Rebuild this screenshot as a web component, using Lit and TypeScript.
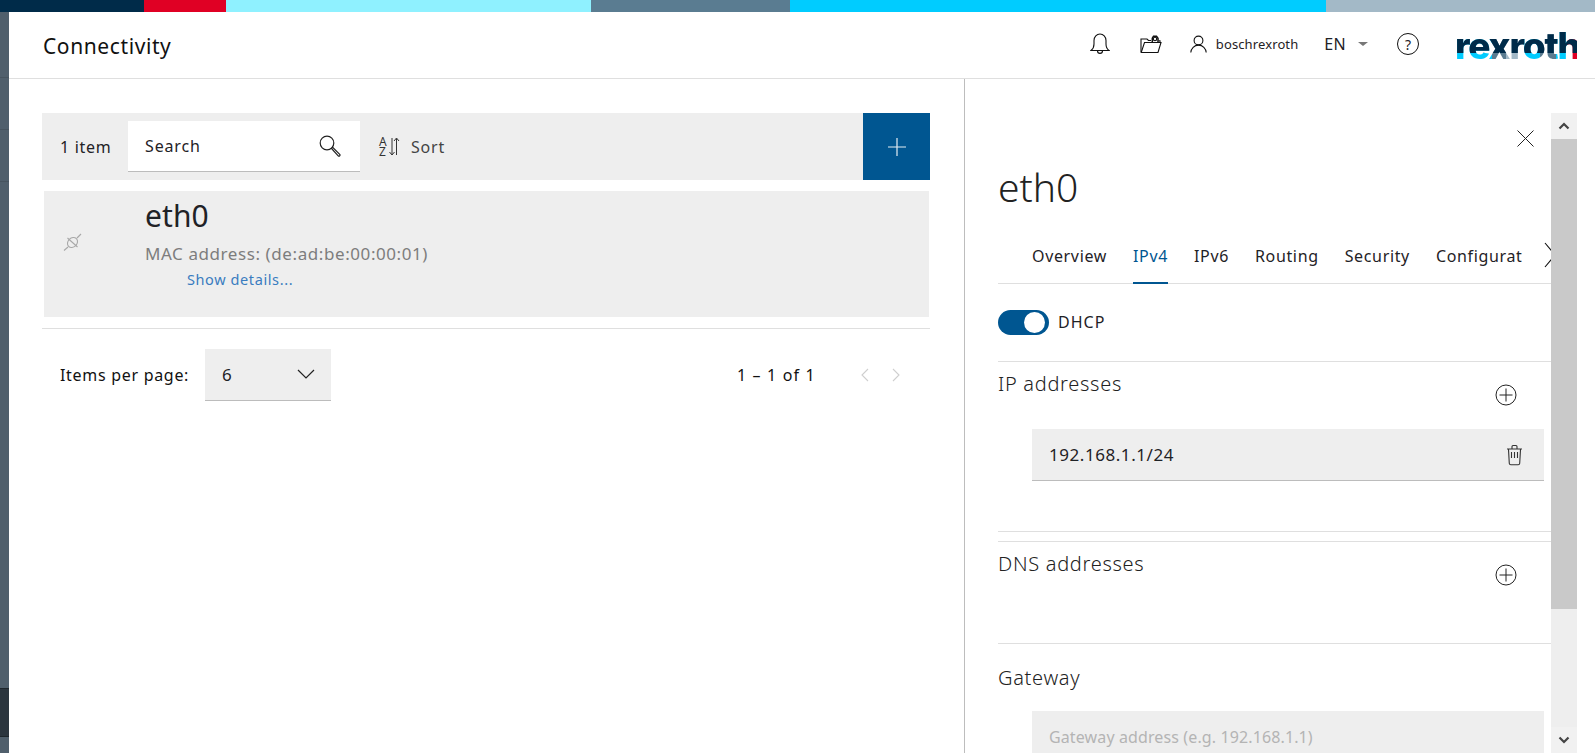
import { LitElement, html, css } from "lit";
import { customElement } from "lit/decorators.js";

const plusCircle = html`<svg class="pc" viewBox="0 0 22 22" width="22" height="22" fill="none" stroke="#222" stroke-width="1"><circle cx="11" cy="11" r="10"/><path d="M11 4.500v13M4.500 11h13"/></svg>`;

@customElement("app-root")
export class AppRoot extends LitElement {
  static styles = css`
    :host { display: flex; flex-direction: column; height: 100vh; overflow: hidden; background: #fff; color: #1f2226;
      font-family: "Noto Sans", "Open Sans", sans-serif; font-size: 16px; }
    svg { display: block; flex: none; }
    .stripe { display: flex; height: 12px; flex: none; }
    .s1 { width: 144px; background: #002b49; }
    .s2 { width: 82px; background: #e00024; }
    .s3 { width: 365px; background: #8ff1ff; }
    .s4 { width: 199px; background: #5a7c91; }
    .s5 { width: 536px; background: #00ccff; }
    .s6 { flex: 1; background: #a3b9c7; }

    .shell { display: flex; flex: 1; min-height: 0; }
    .rail { width: 9px; flex: none; background: #505f6c; display: flex; flex-direction: column; }
    .rail i { display: block; height: 52px; border-bottom: 1px solid #47545f; box-sizing: border-box; flex: none; }
    .rail i:first-child { height: 66px; }
    .rail .gap { flex: none; height: 506px; border: none; }
    .rail .dark { height: 49px; background: #2b353e; border-top: 1px solid #1e262c; border-bottom: 1px solid #1e262c; }
    .main { flex: 1; min-width: 0; display: flex; flex-direction: column; }

    header { flex: none; height: 64px; border-bottom: 1px solid #dfdfdf; display: flex; align-items: center; padding-left: 34px; padding-bottom: 2px; }
    .app-title { font-size: 21px; letter-spacing: .6px; flex: 1; color: #111; margin-top: 3px; }
    .hbtn { display: flex; align-items: center; }
    .bell { margin-right: 30px; }
    .folder { margin-right: 28px; }
    .uname { font-size: 13px; margin-left: 9px; margin-right: 26px; letter-spacing: .12px; }
    .lang { font-size: 16px; letter-spacing: .3px; margin-right: 12px; }
    .caret { width: 0; height: 0; border-left: 5px solid transparent; border-right: 5px solid transparent; border-top: 4px solid #777; margin-right: 29px; }
    .help { width: 20px; height: 20px; border: 1px solid #111; border-radius: 50%; display: flex; align-items: center; justify-content: center; font-size: 14px; margin-right: 36px; }
    .logo { font-family: "Inter", sans-serif; font-weight: 800; font-size: 37px; line-height: 44px; letter-spacing: -1.2px; margin: 3px 18px 0 0; width: 122px; white-space: nowrap;
      color: transparent; -webkit-background-clip: text; background-clip: text;
      background-image:
        linear-gradient(#002b49 0 66%, transparent 66%),
        linear-gradient(90deg, #00ccff 0 30%, #5a7c91 30% 42%, #a3b9c7 42% 56%, #00ccff 56% 70%, #5a7c91 70% 83%, #00ccff 83% 92%, #e00024 92%); }

    .body { flex: 1; display: flex; min-height: 0; }
    .left { width: 956px; flex: none; box-sizing: border-box; border-right: 1px solid #bdbdbd; padding: 34px 34px 0 33px; }
    .toolbar { height: 67px; background: #eee; display: flex; align-items: center; }
    .count { margin-left: 18px; width: 68px; font-size: 16px; letter-spacing: .7px; }
    .search { width: 232px; height: 51px; box-sizing: border-box; background: #fff; border-bottom: 1px solid #bcbcbc; display: flex; align-items: center; padding: 0 19px 0 17px; justify-content: space-between; letter-spacing: .85px; }
    .sort { display: flex; align-items: center; margin-left: 19px; color: #444; gap: 11px; letter-spacing: .8px; flex: 1; }
    .sort svg { overflow: visible; }
    .add { width: 67px; height: 67px; background: #005691; display: flex; align-items: center; justify-content: center; color: #e4edf3; }
    .card { height: 126px; margin: 11px 1px 0 2px; background: #eee; display: flex; }
    .card-icon { width: 101px; flex: none; padding: 42px 0 0 19px; box-sizing: border-box; color: #a8a8a8; }
    .card-title { font-size: 30px; line-height: 36px; margin-top: 7px; letter-spacing: .1px; }
    .mac { color: #7d7d7d; font-size: 17px; line-height: 24px; margin-top: 8px; letter-spacing: .58px; }
    .details { color: #3a7cc0; font-size: 14.5px; line-height: 20px; margin: 3px 0 0 42px; letter-spacing: .6px; }
    .hr { height: 1px; background: #dfdfdf; margin-top: 11px; }
    .pager { display: flex; align-items: center; margin-top: 20px; height: 52px; }
    .ipp { margin-left: 18px; width: 145px; letter-spacing: .7px; color: #111; }
    .select { width: 126px; height: 52px; box-sizing: border-box; background: #eee; border-bottom: 1px solid #bcbcbc; display: flex; align-items: center; justify-content: space-between; padding: 0 16px 1px 17px; font-size: 17px; }
    .range { margin-left: 406px; width: 124px; letter-spacing: 1.15px; color: #111; }
    .nav { display: flex; gap: 23px; color: #cfcfcf; }

    .panel { flex: 1; min-width: 0; display: flex; padding-left: 33px; padding-right: 18px; }
    .content { width: 553px; flex: none; overflow: hidden; }
    .close { display: flex; justify-content: flex-end; padding: 51px 17px 0 0; color: #222; }
    .big { font-size: 39px; line-height: 44px; margin-top: 18px; color: #222; font-weight: 300; }
    .tabs { display: flex; align-items: flex-start; height: 53px; margin-top: 22px; border-bottom: 1px solid #dfdfdf; padding-left: 34px; width: 600px; box-sizing: border-box; }
    .tab-scroll { width: 490px; flex: none; overflow: hidden; display: flex; gap: 26px; }
    .tab { height: 53px; line-height: 50px; box-sizing: border-box; white-space: nowrap; font-size: 16px; letter-spacing: .65px; color: #1f2226; flex: none; }
    .tab.on { color: #005691; border-bottom: 2px solid #005691; }
    .tab-arrow { margin: 11px 0 0 22px; color: #111; }
    .dhcp { display: flex; align-items: center; height: 25px; margin-top: 26px; gap: 9px; letter-spacing: 1px; line-height: 23px; }
    .dhcp span { margin-top: -1px; }
    .toggle { width: 51px; height: 25px; border-radius: 13px; background: #005691; box-sizing: border-box; padding: 2px 2px 2px 26px; }
    .toggle b { display: block; width: 21px; height: 21px; border-radius: 50%; background: #fff; }
    .sec { border-top: 1px solid #dfdfdf; }
    .s-ip { margin-top: 26px; padding-bottom: 50px; border-bottom: 1px solid #dfdfdf; }
    .s-dns { margin-top: 9px; height: 101px; }
    .s-gw { padding-top: 12px; }
    .sec-head { display: flex; justify-content: space-between; align-items: flex-start; height: 67px; }
    .sec-title { font-size: 20px; font-weight: 300; line-height: 44px; letter-spacing: .7px; color: #222; }
    .pc { margin: 22px 34px 0 0; }
    .field { height: 52px; box-sizing: border-box; margin: 0 7px 0 34px; background: #eee; border-bottom: 1px solid #bcbcbc; display: flex; align-items: center; justify-content: space-between; padding: 0 21px 0 17px; }
    .val { font-size: 17px; letter-spacing: .55px; }
    .s-gw .sec-head { height: 55px; }
    .ph { color: #b4b4b4; letter-spacing: .12px; }

    .scroll { width: 26px; flex: none; margin-top: 34px; display: flex; flex-direction: column; background: #eee; }
    .sb { height: 26px; flex: none; display: flex; align-items: center; justify-content: center; color: #444; background: #f1f1f1; }
    .thumb { height: 470px; flex: none; background: #c9c9c9; }
    .track { flex: 1; }
  `;

  render() {
    return html`
      <div class="stripe"><div class="s1"></div><div class="s2"></div><div class="s3"></div><div class="s4"></div><div class="s5"></div><div class="s6"></div></div>
      <div class="shell">
        <div class="rail"><i></i><i></i><i></i><i class="gap"></i><i class="dark"></i></div>
        <div class="main">
          <header>
            <div class="app-title">Connectivity</div>
            <div class="hbtn bell">
              <svg viewBox="0 0 20 22" width="20" height="22" fill="none" stroke="#111" stroke-width="1.100"><path d="M1 17.500c2.300-1.700 3-3.400 3-6.500V7.500a6 6.500 0 0 1 12 0V11c0 3.100.7 4.800 3 6.500z"/><path d="M7.500 17.700a2.500 2.700 0 0 0 5 0"/></svg>
            </div>
            <div class="hbtn folder">
              <svg viewBox="0 0 22 20" width="22" height="20" fill="none" stroke="#111" stroke-width="1.100"><path d="M1 18V5h6l1.500 1.500H11"/><path d="M1.200 18.500h16.800l3-10H4.500z"/><path d="M20 8.500V6.800h-1.500"/><circle cx="15" cy="5" r="1.700"/><path d="M12.300 8V4.200l1.200-1.900 3-.1 1.500 2V8" stroke-width="1.500"/></svg>
            </div>
            <div class="hbtn">
              <svg viewBox="0 0 17 18" width="17" height="18" fill="none" stroke="#111" stroke-width="1.100"><circle cx="8.500" cy="5.500" r="4.400"/><path d="M.8 17.500c.3-4 3.400-7.400 7.700-7.400s7.400 3.400 7.700 7.400"/></svg>
              <span class="uname">boschrexroth</span>
            </div>
            <span class="lang">EN</span><span class="caret"></span>
            <span class="help">?</span>
            <div class="logo">rexroth</div>
          </header>
          <div class="body">
            <section class="left">
              <div class="toolbar">
                <span class="count">1 item</span>
                <div class="search"><span>Search</span>
                  <svg viewBox="0 0 22 22" width="22" height="22" fill="none" stroke="#222" stroke-width="1.200"><circle cx="8" cy="8" r="6.800"/><path d="M12.500 13.500l1.200-1.200 7 7a1 1 0 0 1-1.500 1.500z"/></svg>
                </div>
                <div class="sort">
                  <svg viewBox="0 0 21 21" width="21" height="21" fill="none" stroke="#333" stroke-width="1"><text x="0" y="9.500" font-size="12" fill="#333" stroke="none" font-family="Noto Sans">A</text><text x="0" y="20" font-size="12" fill="#333" stroke="none" font-family="Noto Sans">Z</text><path d="M13 2v16.500M10.500 16l2.500 3 2.500-3M17.500 19V2.500M15 5l2.500-3L20 5"/></svg>
                  <span>Sort</span>
                </div>
                <div class="add"><svg viewBox="0 0 18 18" width="18" height="18" stroke="currentColor" stroke-width="1.200"><path d="M9 0v18M0 9h18"/></svg></div>
              </div>
              <div class="card">
                <div class="card-icon">
                  <svg viewBox="0 0 19 19" width="19" height="19" fill="none" stroke="currentColor" stroke-width="1.100"><ellipse cx="9.500" cy="9.500" rx="5.500" ry="4.500" transform="rotate(-45 9.500 9.500)"/><path d="M1 17.500l4-3.500M14 5l4-4M4.500 5l10 9"/></svg>
                </div>
                <div>
                  <div class="card-title">eth0</div>
                  <div class="mac">MAC address: (de:ad:be:00:00:01)</div>
                  <div class="details">Show details...</div>
                </div>
              </div>
              <div class="hr"></div>
              <div class="pager">
                <span class="ipp">Items per page:</span>
                <div class="select"><span>6</span>
                  <svg viewBox="0 0 18 10" width="18" height="10" fill="none" stroke="#222" stroke-width="1.200"><path d="M1 1l8 8 8-8"/></svg>
                </div>
                <span class="range">1 – 1 of 1</span>
                <div class="nav">
                  <svg viewBox="0 0 8 14" width="8" height="14" fill="none" stroke="currentColor" stroke-width="1.100"><path d="M7 1L1 7l6 6"/></svg>
                  <svg viewBox="0 0 8 14" width="8" height="14" fill="none" stroke="currentColor" stroke-width="1.100"><path d="M1 1l6 6-6 6"/></svg>
                </div>
              </div>
            </section>
            <section class="panel">
              <div class="content">
                <div class="close"><svg viewBox="0 0 17 17" width="17" height="17" fill="none" stroke="currentColor" stroke-width="1"><path d="M.5.5l16 16M16.500.5l-16 16"/></svg></div>
                <div class="big">eth0</div>
                <div class="tabs">
                  <div class="tab-scroll">
                    <span class="tab">Overview</span>
                    <span class="tab on">IPv4</span>
                    <span class="tab">IPv6</span>
                    <span class="tab">Routing</span>
                    <span class="tab">Security</span>
                    <span class="tab">Configuration</span>
                  </div>
                  <svg class="tab-arrow" viewBox="0 0 12 26" width="12" height="26" fill="none" stroke="currentColor" stroke-width="1.100"><path d="M1 1l10 12L1 25"/></svg>
                </div>
                <div class="dhcp"><div class="toggle"><b></b></div><span>DHCP</span></div>
                <div class="sec s-ip">
                  <div class="sec-head"><span class="sec-title">IP addresses</span>${plusCircle}</div>
                  <div class="field"><span class="val">192.168.1.1/24</span>
                    <svg viewBox="0 0 17 22" width="17" height="22" fill="none" stroke="#333" stroke-width="1.100"><path d="M1 5h15M6 4.500V2.500a1 1 0 0 1 1-1h3a1 1 0 0 1 1 1v2M2.500 5.500l.8 14a1.500 1.500 0 0 0 1.500 1.300h7.400a1.500 1.500 0 0 0 1.500-1.300l.8-14"/><path d="M5.500 8v6M8.500 8v6M11.500 8v6"/></svg>
                  </div>
                </div>
                <div class="sec s-dns">
                  <div class="sec-head"><span class="sec-title">DNS addresses</span>${plusCircle}</div>
                </div>
                <div class="sec s-gw">
                  <div class="sec-head"><span class="sec-title">Gateway</span></div>
                  <div class="field"><span class="ph">Gateway address (e.g. 192.168.1.1)</span></div>
                </div>
              </div>
              <div class="scroll">
                <div class="sb"><svg viewBox="0 0 12 8" width="12" height="8" fill="none" stroke="currentColor" stroke-width="2.200"><path d="M1.500 6.500L6 2l4.500 4.500"/></svg></div>
                <div class="thumb"></div>
                <div class="track"></div>
                <div class="sb"><svg viewBox="0 0 12 8" width="12" height="8" fill="none" stroke="currentColor" stroke-width="2.200"><path d="M1.500 1.500L6 6l4.500-4.500"/></svg></div>
              </div>
            </section>
          </div>
        </div>
      </div>
    `;
  }
}
